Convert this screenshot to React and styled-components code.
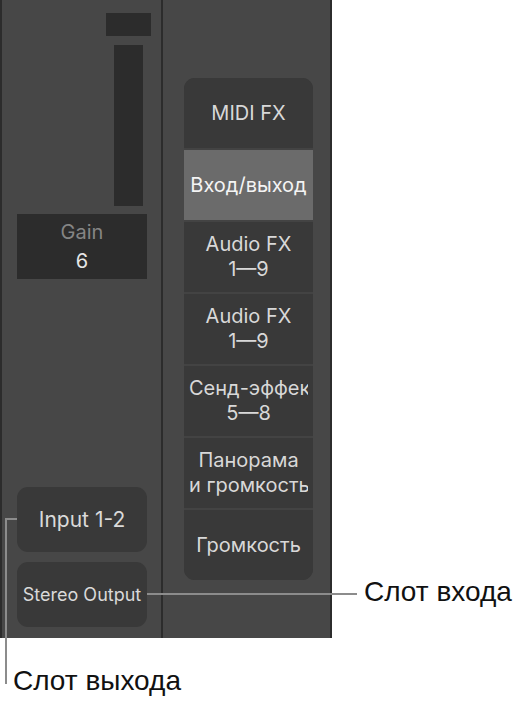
import styled, { createGlobalStyle } from "styled-components";

const GlobalStyle = createGlobalStyle`
  html, body {
    margin: 0;
    padding: 0;
    background: #ffffff;
  }
`;

const Page = styled.div`
  position: relative;
  width: 524px;
  height: 705px;
  overflow: hidden;
  background: #ffffff;
  font-family: Inter, "Noto Sans", sans-serif;
`;

const Panel = styled.div`
  display: flex;
  width: 332px;
  height: 638px;
  background: #474747;
  border-left: 2px solid #2c2c2c;
  border-right: 2px solid #2c2c2c;
  box-sizing: border-box;
`;

const LeftStrip = styled.div`
  display: flex;
  flex-direction: column;
  width: 161px;
  padding: 13px 0 11px 15px;
  box-sizing: border-box;
  border-right: 2px solid #2c2c2c;
`;

const MeterColumn = styled.div`
  display: flex;
  flex-direction: column;
  align-items: center;
  align-self: flex-end;
  width: 45px;
  margin-right: 10px;
  gap: 9px;
`;

const PeakBox = styled.div`
  width: 45px;
  height: 23px;
  background: #2c2c2c;
`;

const Meter = styled.div`
  width: 29px;
  height: 161px;
  background: #2c2c2c;
`;

const GainBox = styled.div`
  display: flex;
  flex-direction: column;
  align-items: center;
  justify-content: center;
  width: 130px;
  height: 65px;
  margin-top: 8px;
  background: #2c2c2c;
  font-size: 20px;
  line-height: 29px;
`;

const GainLabel = styled.span`
  color: #858585;
`;

const GainValue = styled.span`
  color: #e6e6e6;
`;

const Spacer = styled.div`
  flex: 1;
`;

const Slot = styled.div`
  display: flex;
  align-items: center;
  justify-content: center;
  width: 130px;
  height: 65px;
  border-radius: 11px;
  background: #393939;
  color: #dadada;
  font-size: ${(p) => p.$size}px;
  white-space: nowrap;
  & + & {
    margin-top: 10px;
  }
`;

const RightStrip = styled.div`
  flex: 1;
  padding: 78px 0 0 21px;
`;

const FxStack = styled.div`
  display: flex;
  flex-direction: column;
  width: 129px;
  border-radius: 11px;
  overflow: hidden;
  background: #393939;
`;

const FxRow = styled.div`
  display: flex;
  align-items: center;
  justify-content: center;
  height: 70px;
  background: ${(p) => (p.$active ? "#6b6b6b" : "#393939")};
  color: ${(p) => (p.$active ? "#f4f4f4" : "#d8d8d8")};
  font-size: 20px;
  line-height: 25px;
  text-align: center;
  white-space: nowrap;
  & + & {
    border-top: 2px solid #434343;
  }
`;

const FxText = styled.div`
  width: 119px;
  margin: 0 5px;
  overflow: hidden;
`;

const Leader = styled.div`
  position: absolute;
  background: #8c8c8c;
`;

const Callout = styled.div`
  position: absolute;
  font-family: "Liberation Sans", Arial, sans-serif;
  font-size: 28px;
  color: #111111;
  white-space: nowrap;
`;

const rows = [
  ["MIDI FX"],
  ["Вход/выход", true],
  ["Audio FX\n1—9"],
  ["Audio FX\n1—9"],
  ["Сенд-эффекты\n5—8"],
  ["Панорама\nи громкость"],
  ["Громкость"],
];

export default function App() {
  return (
    <Page>
      <GlobalStyle />
      <Panel>
        <LeftStrip>
          <MeterColumn>
            <PeakBox />
            <Meter />
          </MeterColumn>
          <GainBox>
            <GainLabel>Gain</GainLabel>
            <GainValue>6</GainValue>
          </GainBox>
          <Spacer />
          <Slot $size={21}>Input 1-2</Slot>
          <Slot $size={18}>Stereo Output</Slot>
        </LeftStrip>
        <RightStrip>
          <FxStack>
            {rows.map(([label, active], i) => (
              <FxRow key={i} $active={active}>
                <FxText>
                  {label.split("\n").map((line, j) => (
                    <div key={j}>{line}</div>
                  ))}
                </FxText>
              </FxRow>
            ))}
          </FxStack>
        </RightStrip>
      </Panel>

      <Leader style={{ left: 147, top: 593, width: 210, height: 2 }} />
      <Callout style={{ left: 364, top: 576 }}>Слот входа</Callout>

      <Leader style={{ left: 5, top: 518, width: 12, height: 2 }} />
      <Leader style={{ left: 5, top: 518, width: 2, height: 166 }} />
      <Callout style={{ left: 13, top: 665 }}>Слот выхода</Callout>
    </Page>
  );
}
